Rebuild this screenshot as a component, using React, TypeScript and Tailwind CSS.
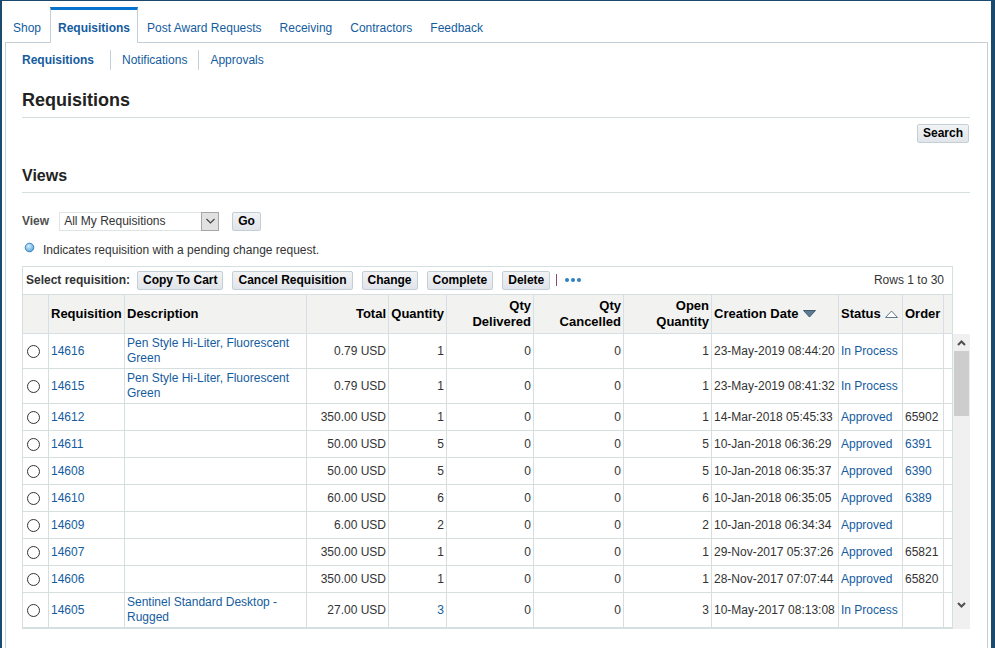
import type { ReactNode } from 'react';

type Requisition = {
  id: string;
  description?: string;
  total: string;
  quantity: number;
  quantityLink?: boolean;
  open: number;
  created: string;
  status: string;
  order?: string;
  orderLink?: boolean;
};

const tabs = ['Shop', 'Requisitions', 'Post Award Requests', 'Receiving', 'Contractors', 'Feedback'];
const actions = ['Copy To Cart', 'Cancel Requisition', 'Change', 'Complete', 'Delete'];

const requisitions: Requisition[] = [
  { id: '14616', description: 'Pen Style Hi-Liter, Fluorescent Green', total: '0.79', quantity: 1, open: 1, created: '23-May-2019 08:44:20', status: 'In Process' },
  { id: '14615', description: 'Pen Style Hi-Liter, Fluorescent Green', total: '0.79', quantity: 1, open: 1, created: '23-May-2019 08:41:32', status: 'In Process' },
  { id: '14612', total: '350.00', quantity: 1, open: 1, created: '14-Mar-2018 05:45:33', status: 'Approved', order: '65902' },
  { id: '14611', total: '50.00', quantity: 5, open: 5, created: '10-Jan-2018 06:36:29', status: 'Approved', order: '6391', orderLink: true },
  { id: '14608', total: '50.00', quantity: 5, open: 5, created: '10-Jan-2018 06:35:37', status: 'Approved', order: '6390', orderLink: true },
  { id: '14610', total: '60.00', quantity: 6, open: 6, created: '10-Jan-2018 06:35:05', status: 'Approved', order: '6389', orderLink: true },
  { id: '14609', total: '6.00', quantity: 2, open: 2, created: '10-Jan-2018 06:34:34', status: 'Approved' },
  { id: '14607', total: '350.00', quantity: 1, open: 1, created: '29-Nov-2017 05:37:26', status: 'Approved', order: '65821' },
  { id: '14606', total: '350.00', quantity: 1, open: 1, created: '28-Nov-2017 07:07:44', status: 'Approved', order: '65820' },
  { id: '14605', description: 'Sentinel Standard Desktop - Rugged', total: '27.00', quantity: 3, quantityLink: true, open: 3, created: '10-May-2017 08:13:08', status: 'In Process' },
];

function Button({ children }: { children: ReactNode }) {
  return (
    <button
      type="button"
      className="flex h-[19px] items-start justify-center rounded-xs border border-[#c4ced7] bg-linear-to-b from-[#f1f3f5] to-[#e1e4e9] px-[5px] text-xs leading-4 font-bold whitespace-nowrap text-black"
    >
      {children}
    </button>
  );
}

function Link({ children }: { children: ReactNode }) {
  return (
    <a href="#" className="text-[#145c9e]">
      {children}
    </a>
  );
}

function Th({ children, right }: { children?: ReactNode; right?: boolean }) {
  return (
    <th
      className={`h-[39px] border-r border-b border-[#d6dfe6] px-0.5 text-[13px] leading-4 font-bold text-black ${right ? 'text-right' : 'text-left'}`}
    >
      {children}
    </th>
  );
}

function Td({ children, right }: { children?: ReactNode; right?: boolean }) {
  return (
    <td className={`border-r border-b border-[#d6dfdf] px-0.5 whitespace-nowrap ${right ? 'text-right' : ''}`}>
      {children}
    </td>
  );
}

export default function App() {
  return (
    <div className="min-h-screen bg-[#1a4a6e] pt-px pr-1 pl-0.5 font-['Liberation_Sans',Arial,sans-serif] text-xs text-[#333333]">
      <div className="min-h-[calc(100vh-1px)] bg-white px-[3px] pt-1.5">
        <nav className="-ml-px flex h-[35px] items-stretch">
          {tabs.map((tab) =>
            tab === 'Requisitions' ? (
              <a
                key={tab}
                href="#"
                className="relative -mb-px border-x border-t-3 border-[#c4ced7] border-t-[#0572ce] bg-white px-[7px] pt-2.5 font-bold text-[#145c9e]"
              >
                {tab}
              </a>
            ) : (
              <a key={tab} href="#" className="px-[9px] pt-[13px] text-[#145c9e]">
                {tab}
              </a>
            ),
          )}
        </nav>

        <main className="min-h-[calc(100vh-42px)] border border-b-0 border-[#c4ced7] pr-[17px] pl-4">
          <nav className="flex h-[34px] items-center">
            <a href="#" className="pr-4 font-bold text-[#145c9e]">
              Requisitions
            </a>
            <a href="#" className="border-l border-[#c4ced7] px-[11px] py-0.5 text-[#145c9e]">
              Notifications
            </a>
            <a href="#" className="border-l border-[#c4ced7] px-[11px] py-0.5 text-[#145c9e]">
              Approvals
            </a>
          </nav>

          <h1 className="flex h-[41px] items-center border-b border-[#d6dfdf] pt-1.5 text-lg font-bold text-[#222222]">
            Requisitions
          </h1>
          <div className="flex justify-end pt-1.5 pr-px">
            <Button>Search</Button>
          </div>

          <h2 className="mt-5 flex h-[30px] items-center border-b border-[#d6dfdf] pb-1 text-base font-bold text-[#222222]">
            Views
          </h2>

          <div className="mt-[18px] flex h-5 items-center">
            <label htmlFor="view" className="mr-2.5 font-bold text-[#4f4f4f]">
              View
            </label>
            <div className="relative mr-[13px]">
              <select
                id="view"
                className="h-[19px] w-40 appearance-none border border-[#dfe4e7] bg-white pl-1 text-xs leading-4 text-[#333333]"
              >
                <option>All My Requisitions</option>
              </select>
              <span className="pointer-events-none absolute top-0 right-0 flex h-[19px] w-[18px] items-center justify-center border border-[#a6a6a6] bg-[#e1e1e1]">
                <svg width="9" height="6" viewBox="0 0 9 6" fill="none" stroke="#444444" strokeWidth="1.2">
                  <path d="M0.5 1 L4.5 5 L8.5 1" />
                </svg>
              </span>
            </div>
            <Button>Go</Button>
          </div>

          <p className="mt-2.5 flex h-[18px] items-center gap-2 pl-0.5">
            <svg className="mb-1.5" width="11" height="11" viewBox="0 0 11 11">
              <defs>
                <radialGradient id="dot" cx="0.4" cy="0.35" r="0.65">
                  <stop offset="0" stopColor="#d4f0ff" />
                  <stop offset="1" stopColor="#5ba8dc" />
                </radialGradient>
              </defs>
              <circle cx="5.5" cy="5.5" r="4.3" fill="url(#dot)" stroke="#3f82b8" />
            </svg>
            Indicates requisition with a pending change request.
          </p>

          <section className="mt-[7px] flex">
            <div className="min-w-0 flex-1">
              <div className="flex h-[29px] items-center border border-[#d6dfdf] pr-2 pb-px pl-[3px]">
                <span className="mr-[7px] font-bold whitespace-nowrap">Select requisition:</span>
                <div className="flex gap-[9px]">
                  {actions.map((action) => (
                    <Button key={action}>{action}</Button>
                  ))}
                </div>
                <span className="mx-1.5 h-3 w-px bg-[#8a4a78]" />
                <button type="button" aria-label="More actions" className="flex gap-0.5 px-0.5">
                  <span className="size-1 rounded-full bg-[#2f80c3]" />
                  <span className="size-1 rounded-full bg-[#2f80c3]" />
                  <span className="size-1 rounded-full bg-[#2f80c3]" />
                </button>
                <span className="ml-auto whitespace-nowrap">Rows 1 to 30</span>
              </div>

              <table className="w-full table-fixed border-separate border-spacing-0 border-b border-l border-[#d6dfdf]">
                <colgroup>
                  <col className="w-[26px]" />
                  <col className="w-[76px]" />
                  <col />
                  <col className="w-[82px]" />
                  <col className="w-[58px]" />
                  <col className="w-[87px]" />
                  <col className="w-[90px]" />
                  <col className="w-[88px]" />
                  <col className="w-[127px]" />
                  <col className="w-16" />
                  <col className="w-[41px]" />
                  <col className="w-[9px]" />
                </colgroup>
                <thead className="bg-[#f2f3f1]">
                  <tr>
                    <Th />
                    <Th>Requisition</Th>
                    <Th>Description</Th>
                    <Th right>Total</Th>
                    <Th right>Quantity</Th>
                    <Th right>Qty Delivered</Th>
                    <Th right>Qty Cancelled</Th>
                    <Th right>Open Quantity</Th>
                    <Th>
                      <span className="flex items-center gap-1">
                        Creation Date
                        <svg width="13" height="8" viewBox="0 0 13 8">
                          <path d="M0.5 0.5 H12.5 L6.5 7 Z" fill="#5d7a90" stroke="#3f5a70" />
                        </svg>
                      </span>
                    </Th>
                    <Th>
                      <span className="flex items-center gap-1">
                        Status
                        <svg className="shrink-0" width="13" height="8" viewBox="0 0 13 8">
                          <path d="M0.5 7.5 H12.5 L6.5 1 Z" fill="#ffffff" stroke="#5d7a90" />
                        </svg>
                      </span>
                    </Th>
                    <Th>Order</Th>
                    <Th />
                  </tr>
                </thead>
                <tbody>
                  {requisitions.map((row) => (
                    <tr key={row.id} className={row.description ? 'h-[35px]' : 'h-[27px]'}>
                      <Td>
                        <input
                          type="radio"
                          name="requisition"
                          aria-label={`Select requisition ${row.id}`}
                          className="ml-0.5 block size-[13px] appearance-none rounded-full border border-[#333333] bg-white"
                        />
                      </Td>
                      <Td>
                        <Link>{row.id}</Link>
                      </Td>
                      <td className="border-r border-b border-[#d6dfdf] px-0.5 leading-[15px]">
                        {row.description && <Link>{row.description}</Link>}
                      </td>
                      <Td right>{row.total} USD</Td>
                      <Td right>{row.quantityLink ? <Link>{row.quantity}</Link> : row.quantity}</Td>
                      <Td right>0</Td>
                      <Td right>0</Td>
                      <Td right>{row.open}</Td>
                      <Td>{row.created}</Td>
                      <Td>
                        <Link>{row.status}</Link>
                      </Td>
                      <Td>{row.orderLink ? <Link>{row.order}</Link> : row.order}</Td>
                      <Td />
                    </tr>
                  ))}
                </tbody>
              </table>
            </div>

            {/* scroll bar, starts under the table header */}
            <div className="mt-[68px] flex w-[17px] flex-col items-center bg-[#f0f0f0]">
              <span className="flex h-[17px] items-center">
                <svg width="9" height="6" viewBox="0 0 9 6" fill="none" stroke="#505050" strokeWidth="2">
                  <path d="M1 5 L4.5 1.5 L8 5" />
                </svg>
              </span>
              <span className="h-[65px] w-[15px] bg-[#cdcdcd]" />
              <span className="mt-auto mb-4 flex h-[17px] items-center">
                <svg width="9" height="6" viewBox="0 0 9 6" fill="none" stroke="#505050" strokeWidth="2">
                  <path d="M1 1 L4.5 4.5 L8 1" />
                </svg>
              </span>
            </div>
          </section>
        </main>
      </div>
    </div>
  );
}
